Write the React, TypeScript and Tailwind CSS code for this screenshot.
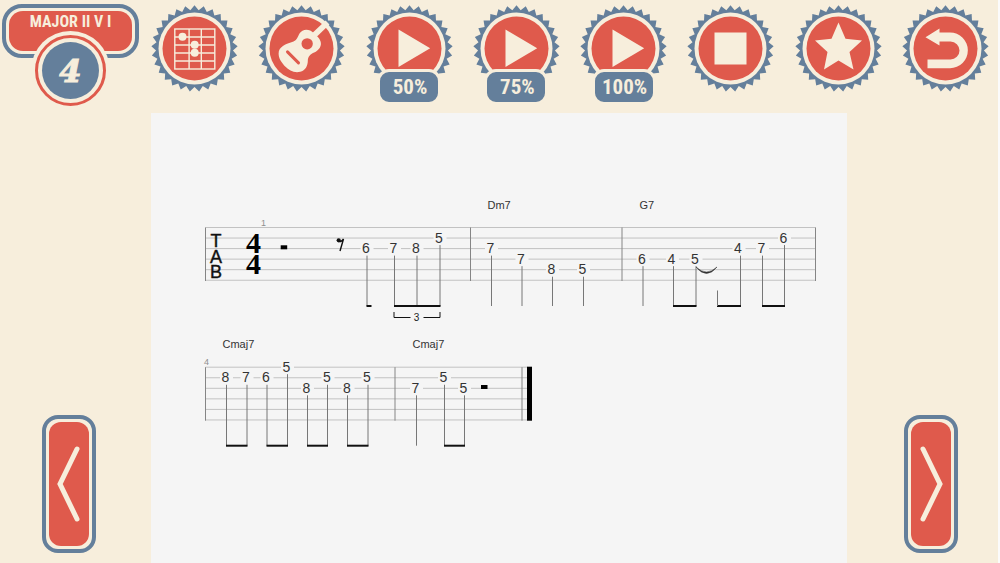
import type { ReactNode } from "react";

const TEETH = 29;

function sealPoints(outer: number, inner: number) {
  const points: string[] = [];
  for (let i = 0; i < TEETH * 2; i++) {
    const r = i % 2 === 0 ? outer : inner;
    const a = (Math.PI * i) / TEETH - Math.PI / 2;
    points.push(`${(r * Math.cos(a)).toFixed(2)},${(r * Math.sin(a)).toFixed(2)}`);
  }
  return points.join(" ");
}

const SEAL = sealPoints(43.2, 38.5);

function SealButton({ name, label, children }: { name: string; label?: string; children: ReactNode }) {
  return (
    <button type="button" aria-label={name} className="relative size-[87px] shrink-0 cursor-pointer">
      <svg viewBox="-43.5 -43.5 87 87" className="size-full" aria-hidden="true">
        <polygon points={SEAL} fill="#647f9b" />
        <circle r="36" fill="#f7eedc" />
        <circle r="32" fill="#df5a4c" />
        {children}
      </svg>
      {label && (
        <span className="absolute top-[64px] left-1/2 flex h-9 w-16 -translate-x-1/2 items-center justify-center rounded-xl border-3 border-[#f7eedc] bg-[#647f9b] pl-0.5 font-['Roboto_Condensed','Roboto',sans-serif] text-[21px] leading-none font-bold text-[#f7eedc]">
          {label}
        </span>
      )}
    </button>
  );
}

function FretboardIcon() {
  return (
    <g stroke="#f7eedc" strokeWidth="1.4" fill="none">
      <rect x="-19.7" y="-19.5" width="40" height="40" />
      <path d="M-5.4-19.5v40M6.8-19.5v40M-19.7-11.5h40M-19.7-3.5h40M-19.7 4.5h40M-19.7 12.5h40" />
      <g fill="#f7eedc" stroke="none">
        <circle cx="-12" cy="-11.7" r="4" />
        <circle cx="0.2" cy="-3.7" r="4" />
        <circle cx="0.2" cy="4.3" r="4" />
      </g>
    </g>
  );
}

function GuitarIcon() {
  return (
    <g transform="scale(0.3333)">
      <path d="M36-38 L78-78" stroke="#f7eedc" strokeWidth="17" />
      <path
        d="M37-46C24-60 3-60-6-45C-12-35-12-26-24-21C-40-15-62-10-68 8C-72 28-58 44-48 55C-38 66-22 74-4 70C12 66 19 52 19 36C19 24 28 16 38 12C52 6 62-8 57-22C54-32 46-38 37-46Z"
        fill="#f7eedc"
      />
      <circle cx="17" cy="-14" r="17" fill="#df5a4c" />
      <path d="M-42 10L-9 43" stroke="#df5a4c" strokeWidth="9" strokeLinecap="round" />
    </g>
  );
}

function PlayIcon() {
  return <path d="M-11-19L20.7-.2L-11 18.5Z" fill="#f7eedc" />;
}

function StopIcon() {
  return <rect x="-16" y="-16" width="32" height="32" fill="#f7eedc" />;
}

function StarIcon() {
  return (
    <path
      d="M0-26L7-9.7L23.5-8L11 3.5L15 21L0 12L-14.5 21L-11 3.5L-23.5-8L-7-9.7Z"
      fill="#f7eedc"
    />
  );
}

function BackIcon() {
  return (
    <path
      d="M-20-11.3L-6-20V-16H4.5A17.85 17.85 0 0 1 4.5 19.7H-18V11H5A9 9 0 0 0 5-7H-6V-3Z"
      fill="#f7eedc"
    />
  );
}

function PageButton({ name, points }: { name: string; points: string }) {
  return (
    <button
      type="button"
      aria-label={name}
      className="h-[138px] w-[54px] cursor-pointer rounded-2xl border-4 border-[#647f9b] p-[3px]"
    >
      <span className="block size-full rounded-xl bg-[#df5a4c]">
        <svg viewBox="7 7 40 124" className="size-full" aria-hidden="true">
          <polyline
            points={points}
            fill="none"
            stroke="#f7eedc"
            strokeWidth="5"
            strokeLinecap="round"
          />
        </svg>
      </span>
    </button>
  );
}

const GAP = 10.55;
const BEAM_Y = 78.5;

type Note = { fret: string; x: number; line: number; stem: number };

type StaffData = {
  number: string;
  numberX: number;
  width: number;
  bars: number[];
  chords: { name: string; x: number }[];
  notes: Note[];
  beams: [number, number][];
  rests: number[];
};

const FIRST: StaffData = {
  number: "1",
  numberX: 58,
  width: 610,
  bars: [0, 265, 416.5, 610],
  chords: [
    { name: "Dm7", x: 282 },
    { name: "G7", x: 434 },
  ],
  notes: [
    { fret: "6", x: 160.5, line: 2, stem: 161.5 },
    { fret: "7", x: 188, line: 2, stem: 189 },
    { fret: "8", x: 210.5, line: 2, stem: 211.5 },
    { fret: "5", x: 233.5, line: 1, stem: 234.5 },
    { fret: "7", x: 285, line: 2, stem: 286 },
    { fret: "7", x: 315.5, line: 3, stem: 316.5 },
    { fret: "8", x: 346, line: 4, stem: 347 },
    { fret: "5", x: 377, line: 4, stem: 378 },
    { fret: "6", x: 436.5, line: 3, stem: 437.5 },
    { fret: "4", x: 466, line: 3, stem: 468 },
    { fret: "5", x: 489.5, line: 3, stem: 490.5 },
    { fret: "4", x: 532.5, line: 2, stem: 535 },
    { fret: "7", x: 556, line: 2, stem: 557 },
    { fret: "6", x: 578, line: 1, stem: 579 },
  ],
  beams: [
    [161, 166],
    [188.5, 235],
    [467.5, 491],
    [511.5, 535.5],
    [556.5, 579.5],
  ],
  rests: [75.2],
};

const SECOND: StaffData = {
  number: "4",
  numberX: 1,
  width: 322,
  bars: [0, 189.5, 316.5],
  chords: [
    { name: "Cmaj7", x: 17 },
    { name: "Cmaj7", x: 207 },
  ],
  notes: [
    { fret: "8", x: 20, line: 1, stem: 21 },
    { fret: "7", x: 40.5, line: 1, stem: 41.5 },
    { fret: "6", x: 60.5, line: 1, stem: 61.5 },
    { fret: "5", x: 81, line: 0, stem: 82 },
    { fret: "8", x: 101, line: 2, stem: 102 },
    { fret: "5", x: 121.5, line: 1, stem: 122 },
    { fret: "8", x: 141.5, line: 2, stem: 142 },
    { fret: "5", x: 161.5, line: 1, stem: 162.5 },
    { fret: "7", x: 210, line: 2, stem: 211 },
    { fret: "5", x: 238, line: 1, stem: 239 },
    { fret: "5", x: 258, line: 2, stem: 259 },
  ],
  beams: [
    [20.5, 42],
    [61, 82.5],
    [101.5, 122.5],
    [141.5, 163],
    [238.5, 259.5],
  ],
  rests: [275.5],
};

function Staff({ data, x, y, children }: { data: StaffData; x: number; y: number; children?: ReactNode }) {
  return (
    <g transform={`translate(${x} ${y})`}>
      {[0, 1, 2, 3, 4, 5].map((n) => (
        <line key={n} x1="0" x2={data.width} y1={n * GAP} y2={n * GAP} stroke="#c2c2c2" />
      ))}
      {data.bars.map((bar) => (
        <line key={bar} x1={bar} x2={bar} y1="0" y2="53.5" stroke="#858585" />
      ))}
      <text x={data.numberX} y="-2" fontSize="9" fill="#8f8f8f" textAnchor="middle">
        {data.number}
      </text>
      {data.chords.map((chord) => (
        <text key={chord.x} x={chord.x} y="-19" fontSize="11" fill="#333333">
          {chord.name}
        </text>
      ))}
      {data.notes.map((note) => (
        <g key={note.stem}>
          <rect x={note.x - 5.5} y={note.line * GAP - 6} width="13" height="12" fill="#f5f5f5" />
          <line
            x1={note.stem}
            x2={note.stem}
            y1={note.line * GAP + 7}
            y2={BEAM_Y}
            stroke="#777777"
          />
          <text x={note.x} y={note.line * GAP + 4.5} fontSize="14" fill="#333333" textAnchor="middle">
            {note.fret}
          </text>
        </g>
      ))}
      {data.beams.map(([from, to]) => (
        <line key={from} x1={from} x2={to} y1={BEAM_Y} y2={BEAM_Y} stroke="#111111" strokeWidth="2" />
      ))}
      {data.rests.map((rest) => (
        <rect key={rest} x={rest} y="17.8" width="6.5" height="4" fill="#000000" />
      ))}
      {children}
    </g>
  );
}

function Score() {
  return (
    <svg
      viewBox="0 0 696 450"
      className="block w-full font-['Liberation_Sans',Arial,sans-serif]"
      role="img"
      aria-label="Guitar tablature"
    >
      <Staff data={FIRST} x={54.5} y={114.5}>
        <g fontSize="18" fill="#111111" stroke="#111111" strokeWidth="0.4" textAnchor="middle">
          <text x="10.5" y="19.5">T</text>
          <text x="10.5" y="35">A</text>
          <text x="10.5" y="50.5">B</text>
        </g>
        <g
          className="font-['Liberation_Serif',serif]"
          fontSize="30"
          fontWeight="700"
          fill="#000000"
          textAnchor="middle"
        >
          <text x="48" y="25">4</text>
          <text x="48" y="46">4</text>
        </g>
        <g stroke="#111111" fill="none">
          <path d="M132.5 13.5Q135 15.5 138 11.5L134.5 23.5" strokeWidth="1.4" />
          <circle cx="133.2" cy="12.8" r="2.1" fill="#111111" stroke="none" />
          <path d="M188.5 84.5V90H205M218 90H234.5V84.5" />
        </g>
        <text x="211" y="93" fontSize="10" fill="#222222" textAnchor="middle">
          3
        </text>
        <path
          d="M490.5 39.5Q501 52.5 511.5 39.5Q501 49.5 490.5 39.5Z"
          fill="#333333"
          stroke="#333333"
          strokeWidth="0.5"
        />
        <line x1="512" x2="512" y1="63" y2={BEAM_Y} stroke="#777777" />
      </Staff>
      <Staff data={SECOND} x={54.5} y={254.2}>
        <rect x="321.5" y="-0.5" width="5" height="54" fill="#000000" />
      </Staff>
    </svg>
  );
}

export default function App() {
  return (
    <div className="min-h-screen bg-[#fbfbfb] pr-0.5">
      <div className="flex min-h-screen flex-col bg-[#f7eedc]">
        <header className="flex h-[113px] shrink-0">
          <div className="relative w-[151px] shrink-0 pt-1 pl-0.5">
            <div className="h-[54px] w-[137px] rounded-[20px] border-4 border-[#647f9b] p-[3px]">
              <h1 className="h-full rounded-[14px] bg-[#df5a4c] pt-[3px] text-center font-['Roboto_Condensed','Roboto',sans-serif] text-[16px] leading-4 font-bold whitespace-nowrap text-[#f7eedc]">
                MAJOR II V I
              </h1>
            </div>
            <div className="absolute top-[31px] left-[31px] size-[79px] rounded-full bg-[#f7eedc] p-1">
              <div className="size-full rounded-full border-3 border-[#df5a4c] p-1">
                <div className="flex size-full items-center justify-center rounded-full bg-[#647f9b] font-['DejaVu_Serif',serif] text-[32px] leading-none font-bold text-[#f7eedc] italic [-webkit-text-stroke:1px_#f7eedc]">
                  4
                </div>
              </div>
            </div>
          </div>
          <nav className="flex flex-1 items-start justify-between pt-[5px] pr-[9px]">
            <SealButton name="Chord diagram">
              <FretboardIcon />
            </SealButton>
            <SealButton name="Guitar">
              <GuitarIcon />
            </SealButton>
            <SealButton name="Play at 50%" label="50%">
              <PlayIcon />
            </SealButton>
            <SealButton name="Play at 75%" label="75%">
              <PlayIcon />
            </SealButton>
            <SealButton name="Play at 100%" label="100%">
              <PlayIcon />
            </SealButton>
            <SealButton name="Stop">
              <StopIcon />
            </SealButton>
            <SealButton name="Favourite">
              <StarIcon />
            </SealButton>
            <SealButton name="Back">
              <BackIcon />
            </SealButton>
          </nav>
        </header>
        <div className="flex flex-1">
          <div className="flex w-[151px] shrink-0 items-end pb-[10px] pl-[42px]">
            <PageButton name="Previous" points="35,34 18,69 35,104" />
          </div>
          <main className="flex-1 bg-[#f5f5f5]">
            <Score />
          </main>
          <div className="flex w-[151px] shrink-0 items-end justify-end pr-[40px] pb-[10px]">
            <PageButton name="Next" points="19,34 36,69 19,104" />
          </div>
        </div>
      </div>
    </div>
  );
}
